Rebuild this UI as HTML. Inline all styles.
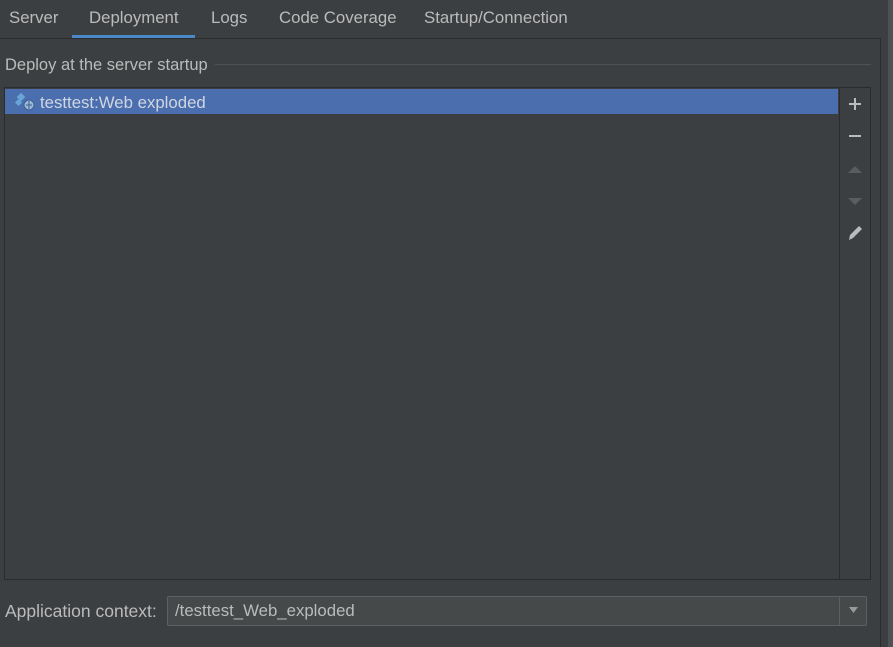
<!DOCTYPE html>
<html><head><style>
body{margin:0;width:893px;height:647px;background:#3c3f41;font-family:"Liberation Sans",sans-serif;color:#bbbbbb;position:relative;overflow:hidden;font-size:16.5px}
.a{position:absolute}
.tab{position:absolute;top:8px;font-size:16.8px;color:#bbbbbb}
</style></head><body>
<div class="a" style="left:0;top:38px;width:880px;height:1px;background:#2b2b2b"></div>
<div class="a" style="left:880px;top:38px;width:1px;height:609px;background:#2b2b2b"></div>
<div class="a" style="left:888px;top:0;width:5px;height:647px;background:#4e5254"></div>
<div class="tab" style="left:9px">Server</div>
<div class="tab" style="left:89px">Deployment</div>
<div class="tab" style="left:211px">Logs</div>
<div class="tab" style="left:279px">Code Coverage</div>
<div class="tab" style="left:424px">Startup/Connection</div>
<div class="a" style="left:72px;top:35px;width:123px;height:3px;background:#4a88c7"></div>
<div class="a" style="left:5px;top:56px">Deploy at the server startup</div>
<div class="a" style="left:215px;top:64px;width:656px;height:1px;background:#515151"></div>
<div class="a" style="left:4px;top:87px;width:865px;height:491px;border:1px solid #2b2b2b"></div>
<div class="a" style="left:839px;top:87px;width:1px;height:492px;background:#2b2b2b"></div>
<div class="a" style="left:5px;top:89px;width:833px;height:25px;background:#4b6eaf"></div>
<svg class="a" style="left:15px;top:92px" width="22" height="20" viewBox="0 0 22 20">
<rect x="3" y="2" width="6" height="6" transform="rotate(45 6 5)" fill="#6aa5d8"/>
<rect x="1" y="8" width="5" height="5" transform="rotate(45 3.5 10.5)" fill="#6aa5d8"/>
<circle cx="14" cy="13" r="5" fill="#9ab8d8" stroke="#3d5f8f"/>
<path d="M11 13h6M14 9v8" stroke="#3d5f8f" stroke-width="1"/>
</svg>
<div class="a" style="left:40px;top:93px;color:#d0d6e0;font-size:16.8px">testtest:Web exploded</div>
<svg class="a" style="left:846px;top:95px" width="18" height="150" viewBox="0 0 18 150">
<path d="M3 9h12M9 3v12" stroke="#bbbbbb" stroke-width="2"/>
<path d="M3 41h12" stroke="#bbbbbb" stroke-width="2"/>
<path d="M2 78l7-7 7 7z" fill="#5a5d5f"/>
<path d="M2 103l7 7 7-7z" fill="#5a5d5f"/>
<path d="M3 145l1-5 9-9 3 3-9 9z" fill="#bbbbbb"/>
</svg>
<div class="a" style="left:5px;top:601px;font-size:17.5px">Application context:</div>
<div class="a" style="left:167px;top:596px;width:698px;height:28px;background:#45494a;border:1px solid #5e6060;border-radius:2px"></div>
<div class="a" style="left:839px;top:597px;width:1px;height:28px;background:#5e6060"></div>
<div class="a" style="left:175px;top:601px;font-size:16.8px">/testtest_Web_exploded</div>
<svg class="a" style="left:848px;top:606px" width="12" height="8"><path d="M1 1h9l-4.5 6z" fill="#9a9a9a"/></svg>
</body></html>
